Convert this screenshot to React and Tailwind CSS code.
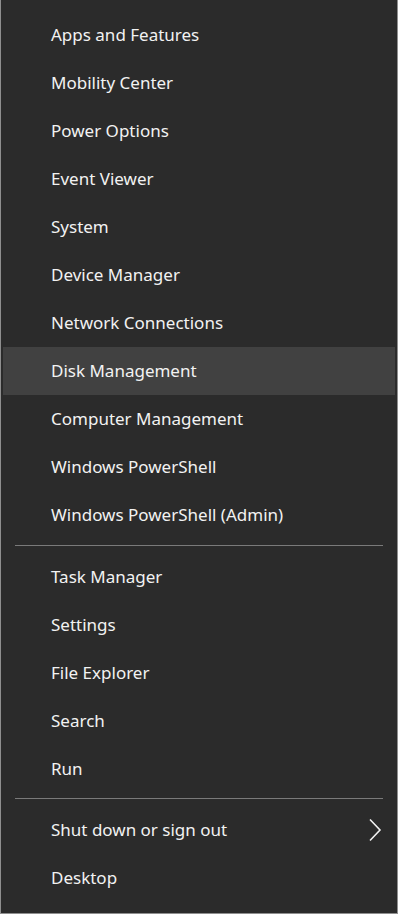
import React from 'react';

const groupA = [
    'Apps and Features',
    'Mobility Center',
    'Power Options',
    'Event Viewer',
    'System',
    'Device Manager',
    'Network Connections',
    'Disk Management',
    'Computer Management',
    'Windows PowerShell',
    'Windows PowerShell (Admin)',
];

const groupB = ['Task Manager', 'Settings', 'File Explorer', 'Search', 'Run'];

function Item({ label, active, chevron }) {
    return (
        <div
            className={`mx-[2px] h-[48px] flex items-center justify-between pl-[48px] pr-[13px] pb-[2px] ${
                active ? 'bg-[#414141]' : ''
            }`}
        >
            <span className="text-[17px] text-[#f2f2f2] leading-none">{label}</span>
            {chevron && (
                <svg width="14" height="24" viewBox="0 0 14 24" fill="none" className="mt-[2px]">
                    <polyline points="2,1.5 12,12 2,22.5" stroke="#f2f2f2" strokeWidth="1.6" />
                </svg>
            )}
        </div>
    );
}

export default function App() {
    return (
        <div
            className="w-[398px] h-[914px] bg-[#2b2b2b] border-x border-b border-[#8f8f8f] pt-[11px] pb-[11px] flex flex-col"
            style={{ fontFamily: '"Segoe UI", "Noto Sans", "Open Sans", sans-serif' }}
        >
            {groupA.map(label => (
                <Item key={label} label={label} active={label === 'Disk Management'} />
            ))}

            <div className="mx-[14px] mt-[6px] mb-[7px] h-px bg-[#7a7a7a]"></div>

            {groupB.map(label => (
                <Item key={label} label={label} />
            ))}

            <div className="mx-[14px] mt-[5px] mb-[7px] h-px bg-[#7a7a7a]"></div>

            <Item label="Shut down or sign out" chevron />
            <Item label="Desktop" />
        </div>
    );
}
